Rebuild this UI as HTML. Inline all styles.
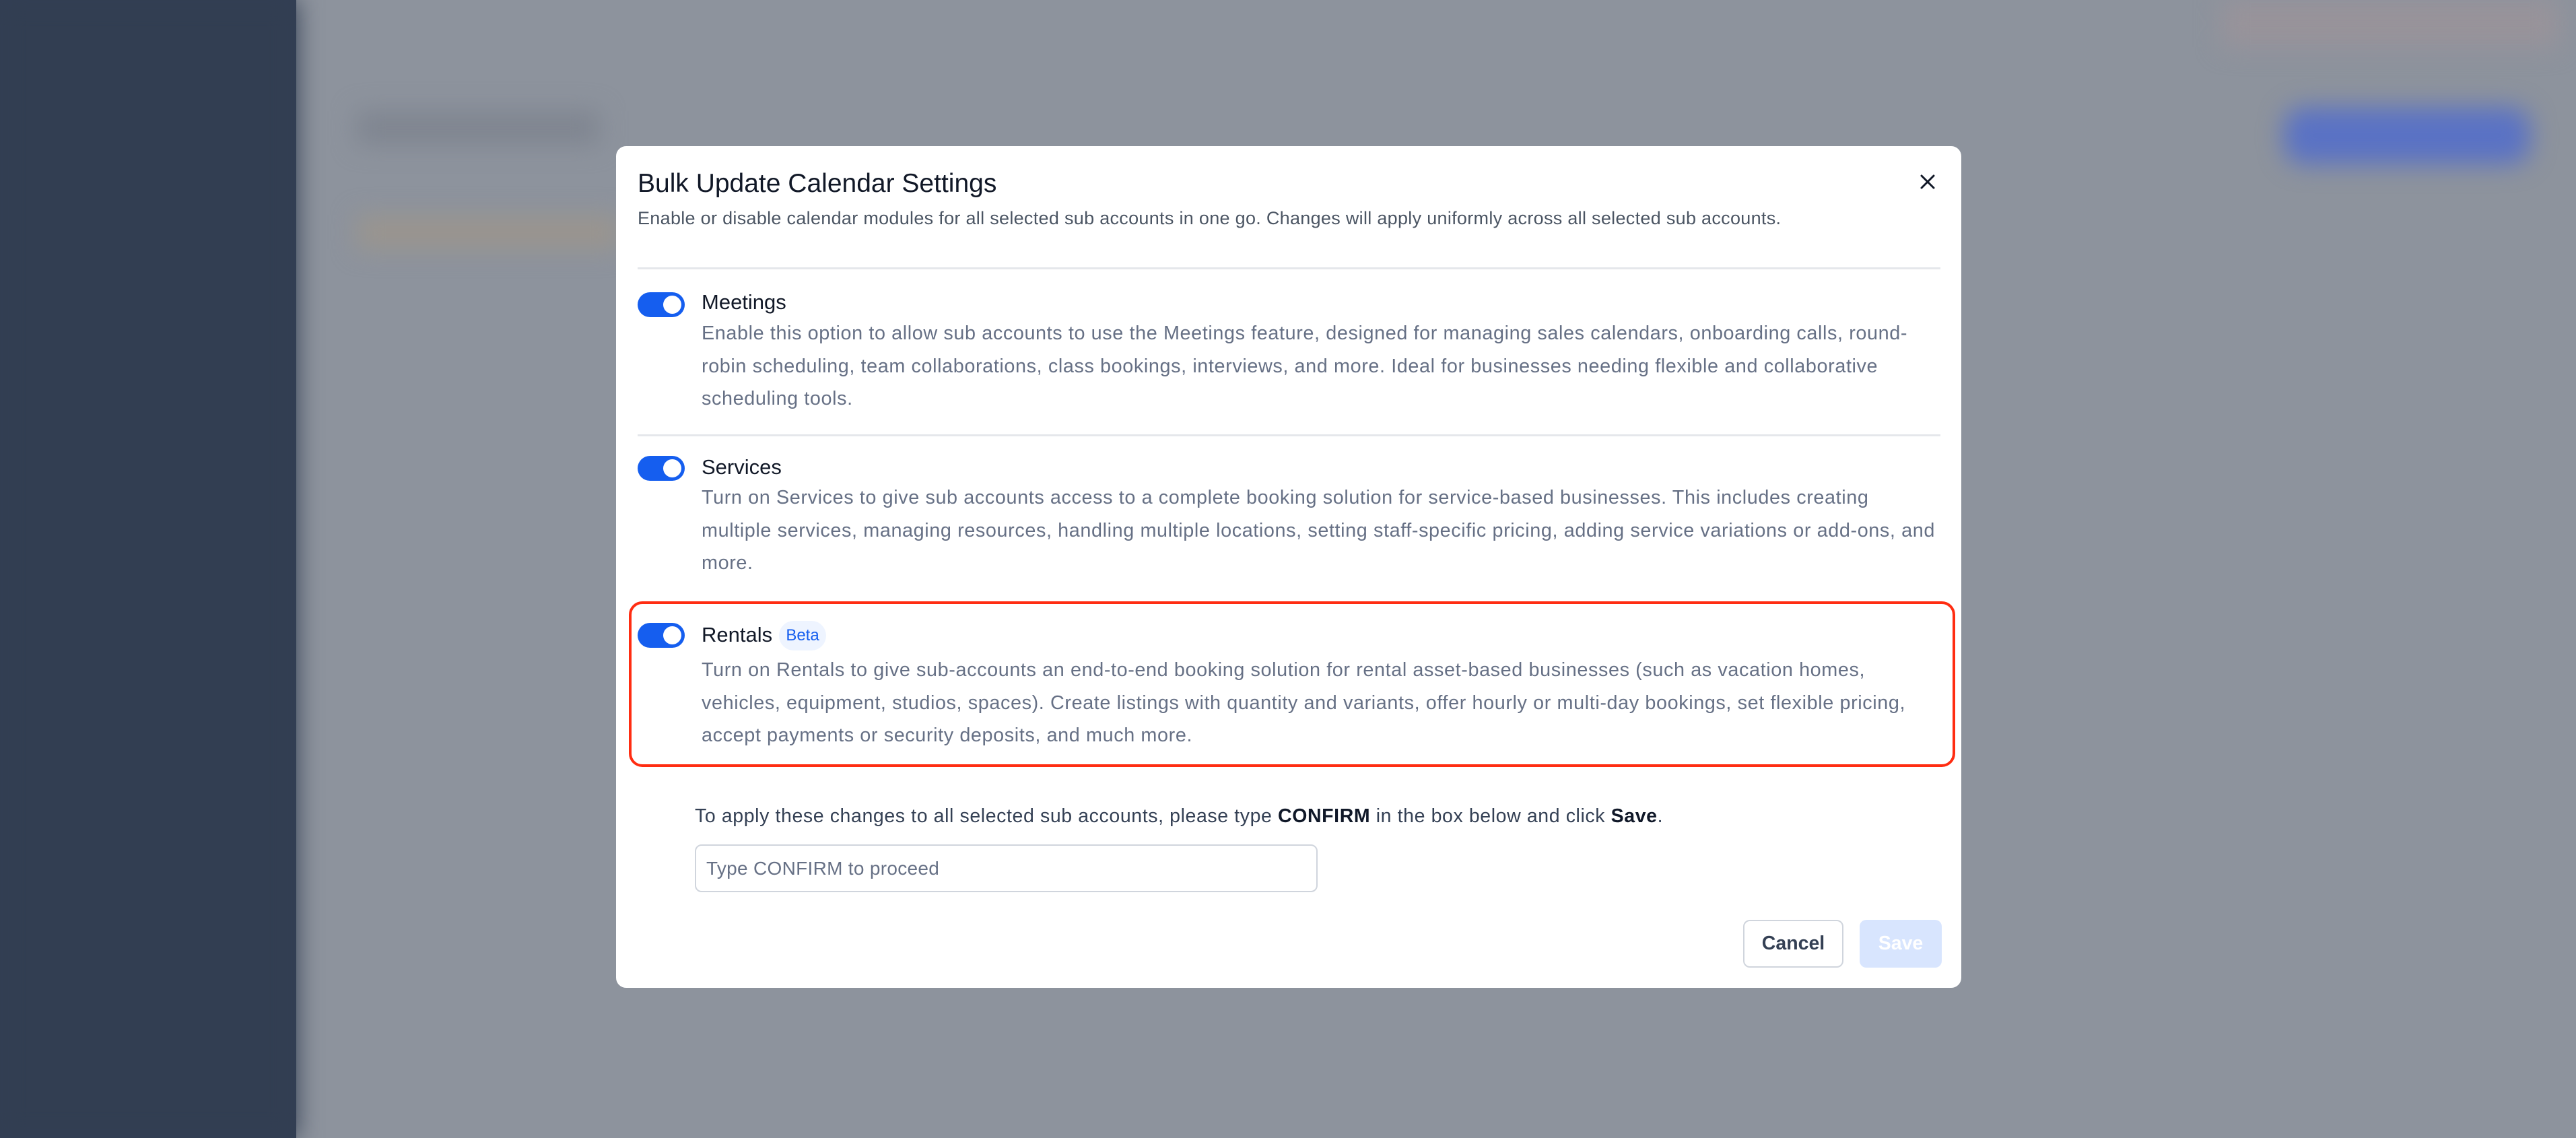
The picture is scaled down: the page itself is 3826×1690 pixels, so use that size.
<!DOCTYPE html>
<html><head><meta charset="utf-8">
<style>
*{margin:0;padding:0;box-sizing:border-box}
html,body{width:3826px;height:1690px;overflow:hidden}
body{background:#8d939d;font-family:"Liberation Sans",sans-serif;position:relative}
.side{position:absolute;left:0;top:0;width:440px;height:1690px;background:#333f54}
.blob{position:absolute;filter:blur(18px)}
.modal{position:absolute;left:915px;top:217px;width:1998px;height:1250px;background:#fff;border-radius:15px}
.abs{position:absolute;white-space:nowrap}
.title{left:32px;top:34px;font-size:39px;color:#111827}
.sub{left:32px;top:92px;font-size:27px;color:#4b5563;letter-spacing:0.3px}
.hr{position:absolute;left:32px;width:1935px;height:3px;background:#e5e7eb}
.tog{position:absolute;width:70px;height:37px;border-radius:19px;background:#155eef}
.tog::after{content:"";position:absolute;right:5px;top:5px;width:27px;height:27px;border-radius:50%;background:#fff}
.h{font-size:31px;color:#111827}
.d{font-size:28.8px;color:#667085;line-height:48.5px;letter-spacing:0.6px}
.red{position:absolute;left:19px;top:676px;width:1970px;height:246px;border:4px solid #ff2d12;border-radius:20px}
.beta{position:absolute;left:242px;top:705px;width:70px;height:44px;border-radius:22px;background:#eef4ff;color:#155eef;font-size:24px;text-align:center;line-height:44px}
.conf{left:117px;top:979px;font-size:28.5px;color:#344054;letter-spacing:0.6px}
.input{position:absolute;left:117px;top:1037px;width:925px;height:71px;border:2px solid #d0d5dd;border-radius:10px;font-size:28px;color:#667085;padding-left:15px;line-height:67px;letter-spacing:0.3px}
.btn{position:absolute;top:1149px;height:71px;border-radius:10px;font-size:28.5px;font-weight:bold;text-align:center;line-height:67px}
</style></head><body>
<div class="side"></div>
<div class="blob" style="left:0;top:0;width:440px;height:1690px;background:#323e52"></div>
<div class="blob" style="left:3392px;top:159px;width:366px;height:85px;background:#5a72c4;border-radius:30px"></div>
<div class="blob" style="left:3300px;top:0;width:500px;height:70px;background:#98939a"></div>
<div class="blob" style="left:530px;top:165px;width:360px;height:50px;background:#7f8590"></div>
<div class="blob" style="left:530px;top:320px;width:390px;height:50px;background:#9a958e"></div>
<div class="modal">
  <div class="abs title">Bulk Update Calendar Settings</div>
  <div class="abs sub">Enable or disable calendar modules for all selected sub accounts in one go. Changes will apply uniformly across all selected sub accounts.</div>
  <svg class="abs" style="left:1936px;top:41px" width="24" height="24" viewBox="0 0 24 24"><path d="M3 3L21 21M21 3L3 21" stroke="#111827" stroke-width="3" stroke-linecap="round"/></svg>
  <div class="hr" style="top:180px"></div>

  <div class="tog" style="left:32px;top:217px"></div>
  <div class="abs h" style="left:127px;top:214px">Meetings</div>
  <div class="abs d" style="left:127px;top:254px">Enable this option to allow sub accounts to use the Meetings feature, designed for managing sales calendars, onboarding calls, round-<br>robin scheduling, team collaborations, class bookings, interviews, and more. Ideal for businesses needing flexible and collaborative<br>scheduling tools.</div>
  <div class="hr" style="top:428px"></div>

  <div class="tog" style="left:32px;top:460px"></div>
  <div class="abs h" style="left:127px;top:459px">Services</div>
  <div class="abs d" style="left:127px;top:498px">Turn on Services to give sub accounts access to a complete booking solution for service-based businesses. This includes creating<br>multiple services, managing resources, handling multiple locations, setting staff-specific pricing, adding service variations or add-ons, and<br>more.</div>

  <div class="red"></div>
  <div class="tog" style="left:32px;top:708px"></div>
  <div class="abs h" style="left:127px;top:708px">Rentals</div>
  <div class="beta">Beta</div>
  <div class="abs d" style="left:127px;top:754px">Turn on Rentals to give sub-accounts an end-to-end booking solution for rental asset-based businesses (such as vacation homes,<br>vehicles, equipment, studios, spaces). Create listings with quantity and variants, offer hourly or multi-day bookings, set flexible pricing,<br>accept payments or security deposits, and much more.</div>

  <div class="abs conf">To apply these changes to all selected sub accounts, please type <b style="color:#101828">CONFIRM</b> in the box below and click <b style="color:#101828">Save</b>.</div>
  <div class="input">Type CONFIRM to proceed</div>
  <div class="btn" style="left:1674px;width:149px;border:2px solid #d0d5dd;color:#344054;background:#fff">Cancel</div>
  <div class="btn" style="left:1847px;width:122px;background:#d8e5fe;color:#fff;line-height:71px">Save</div>
</div>
</body></html>
